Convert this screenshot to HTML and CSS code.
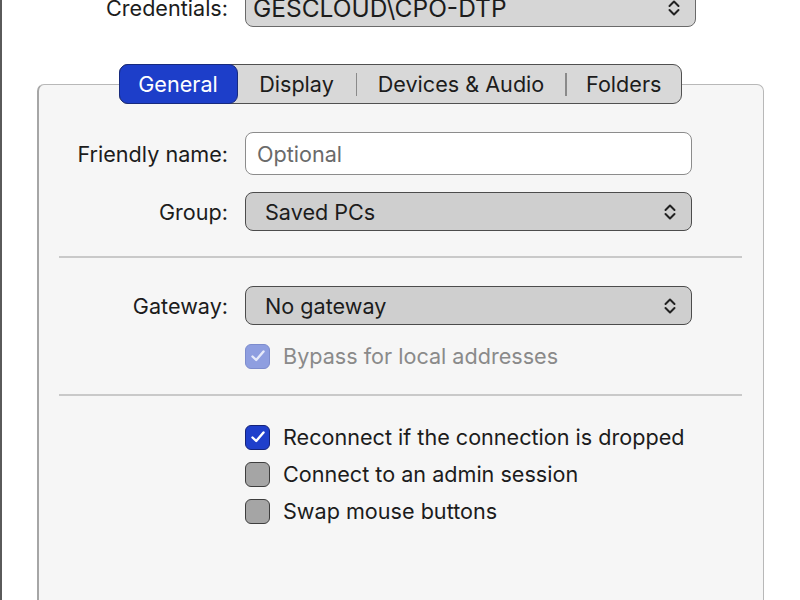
FILE: index.html
```html
<!DOCTYPE html>
<html>
<head>
<meta charset="utf-8">
<link rel="stylesheet" href="styles.css">
</head>
<body>
<div class="window">
  <div class="cred-row">
    <div class="label">Credentials:</div>
    <div class="popup popup-cred">
      <span>GESCLOUD\CPO-DTP</span>
      <svg class="chev" width="14" height="18" viewBox="0 0 14 18"><path d="M2.5 7 L7 2.5 L11.5 7 M2.5 11 L7 15.5 L11.5 11" fill="none" stroke="#222" stroke-width="2" stroke-linecap="round" stroke-linejoin="round"/></svg>
    </div>
  </div>

  <div class="tabwrap">
    <div class="tabs">
      <div class="tab active">General</div>
      <div class="tab">Display</div>
      <div class="sep"></div>
      <div class="tab">Devices &amp; Audio</div>
      <div class="sep"></div>
      <div class="tab">Folders</div>
    </div>
    <div class="panel">
      <div class="form">
        <div class="label">Friendly name:</div>
        <div class="field">Optional</div>
        <div class="label">Group:</div>
        <div class="popup">
          <span>Saved PCs</span>
          <svg class="chev" width="14" height="18" viewBox="0 0 14 18"><path d="M2.5 7 L7 2.5 L11.5 7 M2.5 11 L7 15.5 L11.5 11" fill="none" stroke="#222" stroke-width="2" stroke-linecap="round" stroke-linejoin="round"/></svg>
        </div>
      </div>
      <div class="divider d1"></div>
      <div class="form">
        <div class="label">Gateway:</div>
        <div class="popup">
          <span>No gateway</span>
          <svg class="chev" width="14" height="18" viewBox="0 0 14 18"><path d="M2.5 7 L7 2.5 L11.5 7 M2.5 11 L7 15.5 L11.5 11" fill="none" stroke="#222" stroke-width="2" stroke-linecap="round" stroke-linejoin="round"/></svg>
        </div>
        <div></div>
        <div class="check disabled bypass">
          <span class="box on"><svg width="16" height="14" viewBox="0 0 16 14"><path d="M2.5 7.5 L6.2 11 L13.5 2.5" fill="none" stroke="#e6eafa" stroke-width="2.4" stroke-linecap="round" stroke-linejoin="round"/></svg></span>
          <span>Bypass for local addresses</span>
        </div>
      </div>
      <div class="divider d2"></div>
      <div class="form">
        <div></div>
        <div class="checks">
          <div class="check">
            <span class="box on"><svg width="16" height="14" viewBox="0 0 16 14"><path d="M2.5 7.5 L6.2 11 L13.5 2.5" fill="none" stroke="#fff" stroke-width="2.4" stroke-linecap="round" stroke-linejoin="round"/></svg></span>
            <span>Reconnect if the connection is dropped</span>
          </div>
          <div class="check">
            <span class="box"></span>
            <span>Connect to an admin session</span>
          </div>
          <div class="check">
            <span class="box"></span>
            <span>Swap mouse buttons</span>
          </div>
        </div>
      </div>
    </div>
  </div>
</div>
</body>
</html>
```

FILE: styles.css
```css
* { box-sizing: border-box; }
html, body {
  margin: 0;
  padding: 0;
  background: #ffffff;
  height: 600px;
  overflow: hidden;
}
body {
  font-family: Inter, "Liberation Sans", sans-serif;
  font-size: 21.6px;
  color: #1c1c1c;
}
.window {
  height: 600px;
  border-left: 2px solid #5a5a5a;
  border-right: 2px solid #ffffff;
  display: flex;
  flex-direction: column;
}
.cred-row {
  display: grid;
  grid-template-columns: 190px 451px;
  column-gap: 17px;
  align-items: center;
  margin-left: 36px;
  margin-top: -12px;
}
.label {
  text-align: right;
  white-space: nowrap;
}
.popup {
  height: 39px;
  border: 1.5px solid #4c4c4c;
  border-radius: 8px;
  background: #cfcfcf;
  display: flex;
  align-items: center;
  justify-content: space-between;
  padding: 0 14px 0 19px;
  white-space: nowrap;
}
.popup-cred {
  background: #d6d6d6;
  border-color: #6a6a6a;
  padding-left: 7px;
  padding-right: 14px;
  font-size: 24.5px;
}
.chev { display: block; }

.tabwrap {
  margin: 37px 34px 0 35px;
  display: flex;
  flex-direction: column;
  align-items: center;
  flex: 1;
}
.tabs {
  position: relative;
  z-index: 1;
  width: 563px;
  height: 40px;
  margin-bottom: -20px;
  background: #d8d8d8;
  border: 1.5px solid #505050;
  border-radius: 9px;
  display: flex;
  align-items: center;
}
.tab {
  height: 100%;
  display: flex;
  align-items: center;
  justify-content: center;
  flex: none;
  white-space: nowrap;
}
.tabs .tab:nth-child(1) { width: 119px; }
.tabs .tab:nth-child(2) { width: 118px; }
.tabs .tab:nth-child(4) { width: 208px; }
.tabs .tab:nth-child(6) { flex: 1; }
.tab.active {
  margin: -1.5px 0 -1.5px -1.5px;
  height: 40px;
  background: #1d3ec9;
  border: 1.5px solid #172a7e;
  border-radius: 9px;
  color: #ffffff;
}
.sep {
  width: 1.5px;
  height: 23px;
  background: #8a8a8a;
}
.panel {
  align-self: stretch;
  flex: 1;
  background: #f6f6f6;
  border: 1px solid #b8b8b8;
  border-left: 2px solid #a6a6a6;
  border-bottom: none;
  border-radius: 7px 7px 0 0;
  padding-top: 47px;
}
.form {
  display: grid;
  grid-template-columns: 189px 447px;
  column-gap: 17px;
  align-items: center;
  row-gap: 17px;
}
.field {
  height: 43px;
  background: #ffffff;
  border: 1.5px solid #8c8c8c;
  border-radius: 8px;
  display: flex;
  align-items: center;
  padding-left: 11px;
  color: #6a6a6a;
}
.divider {
  height: 2px;
  background: #c9c9c9;
  margin: 0 21px 0 20px;
}
.d1 { margin-top: 25px; margin-bottom: 28px; }
.d2 { margin-top: 25px; margin-bottom: 28px; }
.check {
  display: flex;
  align-items: center;
  gap: 13px;
  height: 26px;
  white-space: nowrap;
}
.bypass { margin-top: 1px; }
.check.disabled { color: #8a8a8a; }
.checks {
  display: flex;
  flex-direction: column;
  gap: 11px;
}
.box {
  width: 25px;
  height: 25px;
  flex: none;
  border-radius: 6px;
  border: 1.5px solid #3e3e3e;
  background: #a5a5a5;
  display: flex;
  align-items: center;
  justify-content: center;
}
.box.on {
  background: #1f3fcb;
  border-color: #15237a;
}
.check.disabled .box.on {
  background: #8e9ee0;
  border-color: #7d8ccd;
}
```
